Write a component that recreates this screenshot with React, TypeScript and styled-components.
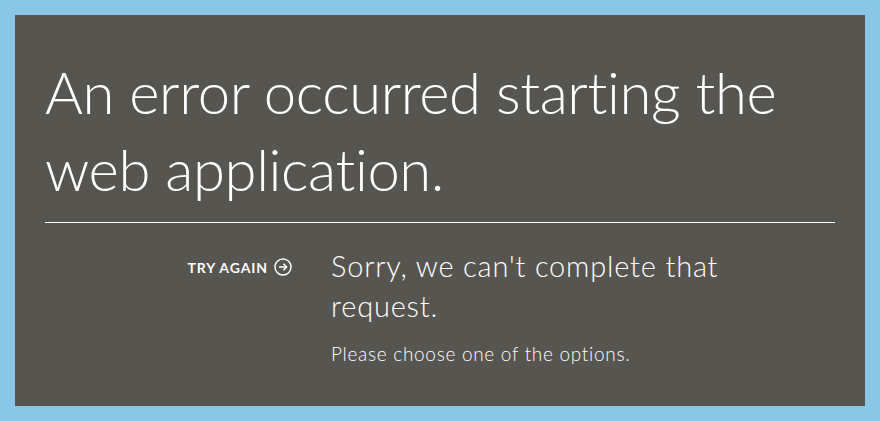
import styled, { createGlobalStyle } from 'styled-components';

const GlobalStyle = createGlobalStyle`
  html, body {
    margin: 0;
    padding: 0;
    background-color: #8ac6e6;
  }
`;

export default function App() {
  return (
    <>
      <GlobalStyle />
      <Page>
        <Panel>
          <Heading>An error occurred starting the web application.</Heading>
          <Divider />
          <Body>
            <Actions>
              <TryAgain>
                TRY AGAIN
                <ArrowCircle />
              </TryAgain>
            </Actions>
            <Message>
              <Title>Sorry, we can't complete that request.</Title>
              <Hint>Please choose one of the options.</Hint>
            </Message>
          </Body>
        </Panel>
      </Page>
    </>
  );
}

function ArrowCircle() {
  return (
    <svg width="18" height="18" viewBox="0 0 18 18" fill="none">
      <circle cx="9" cy="8" r="8" stroke="#ffffff" strokeWidth="1.5" />
      <path d="M5 8h7.6M9.4 4.7L12.7 8l-3.3 3.3" stroke="#ffffff" strokeWidth="1.5" />
    </svg>
  );
}

const Page = styled.div`
  width: 880px;
  height: 421px;
  box-sizing: border-box;
  padding: 15px;
`;

const Panel = styled.div`
  width: 100%;
  height: 100%;
  box-sizing: border-box;
  background-color: #575550;
  color: #ffffff;
  padding: 0 30px;
  display: flex;
  flex-direction: column;
  font-family: Lato, 'Open Sans', 'Liberation Sans', sans-serif;
  font-variant-ligatures: none;
`;

const Heading = styled.h1`
  margin: 0;
  padding-top: 38px;
  font-size: 58px;
  font-weight: 300;
  line-height: 77px;
  letter-spacing: -0.4px;
`;

const Divider = styled.div`
  height: 1px;
  margin-top: 15px;
  background-color: #ffffff;
`;

const Body = styled.div`
  display: flex;
  flex-direction: row;
  align-items: flex-start;
  gap: 39px;
  padding-top: 23px;
`;

const Actions = styled.div`
  width: 247px;
  display: flex;
  justify-content: flex-end;
`;

const TryAgain = styled.div`
  display: flex;
  align-items: center;
  gap: 6px;
  margin-top: 13px;
  font-size: 14px;
  font-weight: 700;
  line-height: 18px;
  letter-spacing: 0.9px;
  cursor: pointer;

  svg {
    overflow: visible;
  }
`;

const Message = styled.div`
  display: flex;
  flex-direction: column;
  width: 430px;
`;

const Title = styled.div`
  font-size: 29px;
  font-weight: 300;
  line-height: 40px;
  letter-spacing: 0.8px;
`;

const Hint = styled.div`
  margin-top: 16px;
  font-size: 19px;
  font-weight: 300;
  line-height: 24px;
  letter-spacing: 0.7px;
`;
